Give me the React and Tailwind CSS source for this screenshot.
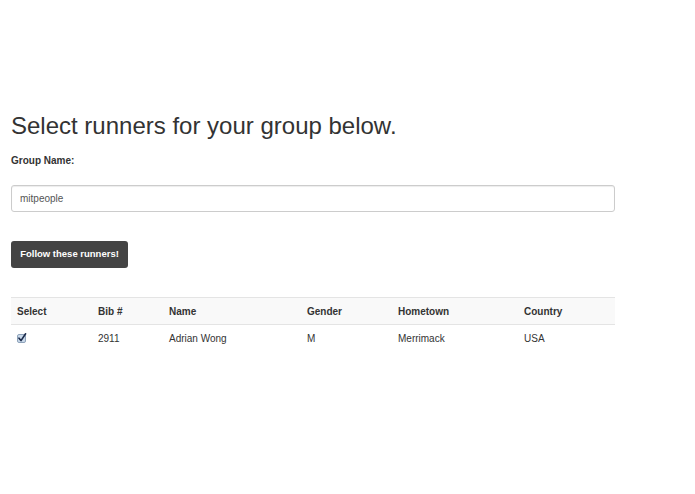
export default function App() {
  const font = { fontFamily: '"Liberation Sans", Arial, Helvetica, sans-serif' };
  return (
    <div className="w-[695px] h-[494px] bg-white text-[#333]" style={font}>
      <div className="pl-[11px] pt-[111px] w-[615px]">
        <h1 className="text-[24px] leading-[30px] font-normal text-[#333]">Select runners for your group below.</h1>
        <div className="mt-[13px] text-[10px] leading-[14px] font-bold">Group Name:</div>
        <div className="mt-[17px] h-[27px] w-[604px] border border-[#ccc] rounded-[3px] flex items-center pl-[8px] text-[10px] text-[#555] shadow-[inset_0_1px_1px_rgba(0,0,0,0.075)]">
          mitpeople
        </div>
        <div className="mt-[29px] h-[27px] w-[117px] rounded-[3px] bg-[#444] flex items-center justify-center text-white text-[9.5px] font-bold">
          Follow these runners!
        </div>
        <table className="mt-[29px] w-[604px] border-collapse text-[10px]">
          <thead>
            <tr className="bg-[#f9f9f9] border-t border-b border-[#e4e4e4] h-[27px]">
              <th className="w-[81px] text-left font-bold pl-[6px]">Select</th>
              <th className="w-[71px] text-left font-bold pl-[6px]">Bib #</th>
              <th className="w-[138px] text-left font-bold pl-[6px]">Name</th>
              <th className="w-[91px] text-left font-bold pl-[6px]">Gender</th>
              <th className="w-[126px] text-left font-bold pl-[6px]">Hometown</th>
              <th className="text-left font-bold pl-[6px]">Country</th>
            </tr>
          </thead>
          <tbody>
            <tr className="h-[27px]">
              <td className="pl-[6px] align-middle">
                <svg width="10" height="10" viewBox="0 0 10 10" className="block">
                  <rect x="0.5" y="1.5" width="8" height="8" rx="1.5" fill="#c9d9ea" stroke="#8fa3ba" />
                  <path d="M2 5.2 L4 7.6 L8.6 0.8" fill="none" stroke="#1b2a4a" strokeWidth="1.6" strokeLinecap="round" strokeLinejoin="round" />
                </svg>
              </td>
              <td className="pl-[6px]">2911</td>
              <td className="pl-[6px]">Adrian Wong</td>
              <td className="pl-[6px]">M</td>
              <td className="pl-[6px]">Merrimack</td>
              <td className="pl-[6px]">USA</td>
            </tr>
          </tbody>
        </table>
      </div>
    </div>
  );
}
